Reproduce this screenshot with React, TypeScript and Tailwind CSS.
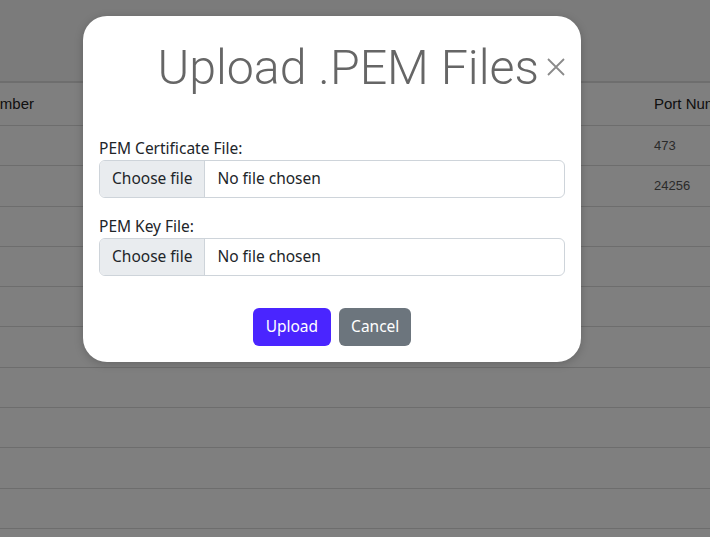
import React from "react";

const rows = [
  { a: "", port: "473" },
  { a: "", port: "24256" },
  { a: "", port: "" },
  { a: "", port: "" },
  { a: "", port: "" },
  { a: "", port: "" },
  { a: "", port: "" },
  { a: "", port: "" },
  { a: "", port: "" },
  { a: "", port: "" },
];

function FileInput() {
  return (
    <div className="flex h-[38px] w-full items-stretch overflow-hidden rounded-[6px] border border-[#ced4da] bg-white text-[15.5px] text-[#212529]">
      <div className="flex items-center border-r border-[#ced4da] bg-[#e9ecef] px-[12px]">Choose file</div>
      <div className="flex items-center pl-[12px]">No file chosen</div>
    </div>
  );
}

export default function App() {
  return (
    <div className="relative h-[537px] w-[710px] overflow-hidden bg-white font-['Liberation_Sans',Arial,sans-serif]">
      <div className="h-[83px] border-b-2 border-[#dcdcdc] bg-[#f6f6f6]" />
      <div className="-ml-[51px] flex flex-col">
        <div className="flex h-[43px] items-center border-b border-[#dadada] text-[15px] text-[#222]">
          <div className="w-[705px] shrink-0">Port Number</div>
          <div className="shrink-0 whitespace-nowrap">Port Number</div>
        </div>
        {rows.map((r, i) => (
          <div key={i} className="flex h-[40.3px] items-center border-b border-[#dadada] text-[13px] text-[#555]">
            <div className="w-[705px] shrink-0">{r.a}</div>
            <div className="shrink-0">{r.port}</div>
          </div>
        ))}
      </div>

      <div className="absolute inset-0 bg-black/50" />

      <div className="absolute left-[83px] top-[16px] w-[498px] rounded-[24px] bg-white px-[16px] pb-[16px] shadow-[0_2px_10px_rgba(0,0,0,0.2)] font-['Noto_Sans',sans-serif]">
        <div className="flex h-[98px] items-center justify-end gap-[8px] pr-0">
          <div className="pt-[6px] font-['Roboto',sans-serif] text-[48.3px] font-light leading-none text-[#666]">Upload .PEM Files</div>
          <svg width="18" height="18" viewBox="0 0 18 18" className="mt-[4px]">
            <path d="M1 1L17 17M17 1L1 17" stroke="#8a8a8a" strokeWidth="1.8" />
          </svg>
        </div>
        <div className="mt-[22px] flex flex-col">
          <label className="text-[15.5px] leading-[24px] text-[#212529]">PEM Certificate File:</label>
          <FileInput />
          <label className="mt-[16px] text-[15.5px] leading-[24px] text-[#212529]">PEM Key File:</label>
          <FileInput />
        </div>
        <div className="mt-[32px] flex justify-center gap-[8px]">
          <button className="h-[38px] rounded-[6px] bg-[#4a25ff] px-[13px] text-[15.5px] text-white">Upload</button>
          <button className="h-[38px] rounded-[6px] bg-[#6c757d] px-[12px] text-[15.5px] text-white">Cancel</button>
        </div>
      </div>
    </div>
  );
}
